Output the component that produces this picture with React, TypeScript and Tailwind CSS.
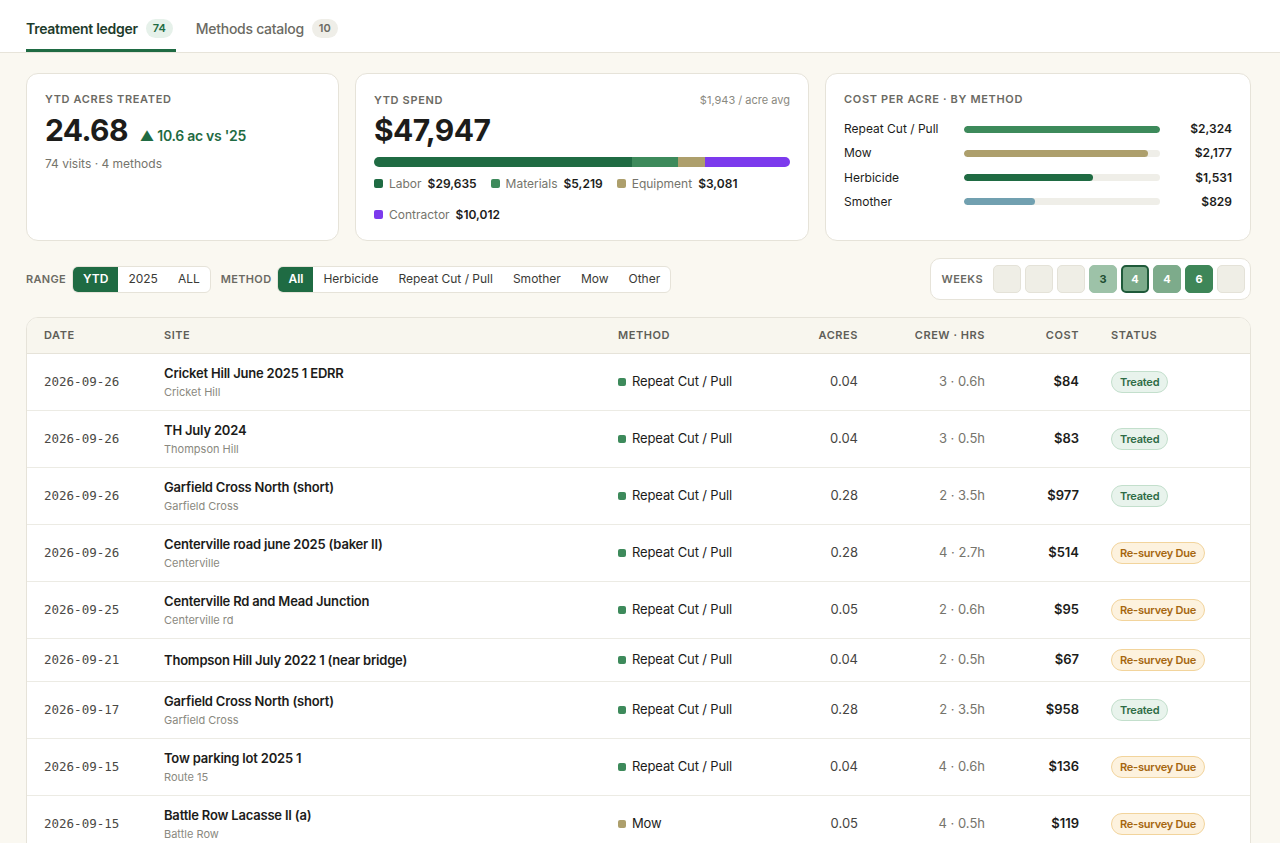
import React from "react";

const font = { fontFamily: "Inter, 'Noto Sans', sans-serif" };
const mono = { fontFamily: "'DejaVu Sans Mono', monospace" };

type Row = {
  date: string;
  title: string;
  sub?: string;
  method: "Repeat Cut / Pull" | "Mow";
  acres: string;
  crew: string;
  cost: string;
  status: "Treated" | "Re-survey Due";
};

const rows: Row[] = [
  { date: "2026-09-26", title: "Cricket Hill June 2025 1 EDRR", sub: "Cricket Hill", method: "Repeat Cut / Pull", acres: "0.04", crew: "3 · 0.6h", cost: "$84", status: "Treated" },
  { date: "2026-09-26", title: "TH July 2024", sub: "Thompson Hill", method: "Repeat Cut / Pull", acres: "0.04", crew: "3 · 0.5h", cost: "$83", status: "Treated" },
  { date: "2026-09-26", title: "Garfield Cross North (short)", sub: "Garfield Cross", method: "Repeat Cut / Pull", acres: "0.28", crew: "2 · 3.5h", cost: "$977", status: "Treated" },
  { date: "2026-09-26", title: "Centerville road june 2025 (baker II)", sub: "Centerville", method: "Repeat Cut / Pull", acres: "0.28", crew: "4 · 2.7h", cost: "$514", status: "Re-survey Due" },
  { date: "2026-09-25", title: "Centerville Rd and Mead Junction", sub: "Centerville rd", method: "Repeat Cut / Pull", acres: "0.05", crew: "2 · 0.6h", cost: "$95", status: "Re-survey Due" },
  { date: "2026-09-21", title: "Thompson Hill July 2022 1 (near bridge)", method: "Repeat Cut / Pull", acres: "0.04", crew: "2 · 0.5h", cost: "$67", status: "Re-survey Due" },
  { date: "2026-09-17", title: "Garfield Cross North (short)", sub: "Garfield Cross", method: "Repeat Cut / Pull", acres: "0.28", crew: "2 · 3.5h", cost: "$958", status: "Treated" },
  { date: "2026-09-15", title: "Tow parking lot 2025 1", sub: "Route 15", method: "Repeat Cut / Pull", acres: "0.04", crew: "4 · 0.6h", cost: "$136", status: "Re-survey Due" },
  { date: "2026-09-15", title: "Battle Row Lacasse II (a)", sub: "Battle Row", method: "Mow", acres: "0.05", crew: "4 · 0.5h", cost: "$119", status: "Re-survey Due" },
  { date: "2026-09-14", title: "Cricket Hill June 2025 2", sub: "Cricket Hill", method: "Repeat Cut / Pull", acres: "0.04", crew: "2 · 0.4h", cost: "$61", status: "Treated" },
];

const costRows = [
  { label: "Repeat Cut / Pull", pct: 100, color: "bg-[#3d8a5b]", value: "$2,324" },
  { label: "Mow", pct: 94, color: "bg-[#ad9f6c]", value: "$2,177" },
  { label: "Herbicide", pct: 66, color: "bg-[#1f6b43]", value: "$1,531" },
  { label: "Smother", pct: 36, color: "bg-[#71a0b0]", value: "$829" },
];

const weeks: { n?: string; cls: string }[] = [
  { cls: "bg-[#efeee6] border-[#e4e2d8]" },
  { cls: "bg-[#efeee6] border-[#e4e2d8]" },
  { cls: "bg-[#efeee6] border-[#e4e2d8]" },
  { n: "3", cls: "bg-[#9dc2a8] border-[#9dc2a8] text-[#1f4f33]" },
  { n: "4", cls: "bg-[#7dab8b] border-[#1f5a3a] border-2 text-white" },
  { n: "4", cls: "bg-[#7dab8b] border-[#7dab8b] text-white" },
  { n: "6", cls: "bg-[#3e8658] border-[#3e8658] text-white" },
  { cls: "bg-[#efeee6] border-[#e4e2d8]" },
];

const cols = "grid grid-cols-[120px_454px_170px_70px_127px_94px_1fr] pl-[17px] items-center";

function Label({ children }: { children: React.ReactNode }) {
  return (
    <div className="text-[11px] font-semibold tracking-[0.06em] uppercase text-[#6b6a63] leading-[16px]">
      {children}
    </div>
  );
}

export default function App() {
  return (
    <div style={font} className="min-h-screen bg-[#faf8f1] text-[#1c1c1a]">
      {/* tabs */}
      <div className="bg-white border-b border-[#e7e4da] h-[53px] px-[26px] flex items-end gap-[20px]">
        <div className="flex items-center gap-2 h-[51px] border-b-[3px] border-[#1f6b43] pt-[7px] pr-[3px]">
          <span className="text-[14px] font-semibold text-[#1d3b2b] tracking-[-0.02em]">Treatment ledger</span>
          <span className="text-[11px] font-semibold text-[#1f6b43] bg-[#e6f1ea] rounded-full px-[7px] py-[1px]">74</span>
        </div>
        <div className="flex items-center gap-2 h-[51px] border-b-[3px] border-transparent pt-[7px]">
          <span className="text-[14px] font-medium text-[#6b6a63] tracking-[-0.02em]">Methods catalog</span>
          <span className="text-[11px] font-semibold text-[#6b6a63] bg-[#efeee8] rounded-full px-[7px] py-[1px]">10</span>
        </div>
      </div>

      <div className="pl-[26px] pr-[29px] pt-[20px]">
        {/* stat cards */}
        <div className="grid grid-cols-[313px_454px_426px] gap-4 h-[168px]">
          <div className="bg-white border border-[#e6e3d9] rounded-[12px] px-[18px] pt-[17px]">
            <Label>YTD Acres Treated</Label>
            <div className="flex items-baseline gap-3 mt-[3px]">
              <span className="text-[30px] font-bold leading-[40px] tracking-[-0.02em]">24.68</span>
              <span className="text-[14px] font-semibold text-[#1f6b43] tracking-[-0.02em]">▲ 10.6 ac vs '25</span>
            </div>
            <div className="text-[12px] text-[#75746c] mt-[5px]">74 visits · 4 methods</div>
          </div>

          <div className="bg-white border border-[#e6e3d9] rounded-[12px] px-[18px] pt-[18px]">
            <div className="flex justify-between items-center">
              <Label>YTD Spend</Label>
              <span className="text-[11px] text-[#8a8980]">$1,943 / acre avg</span>
            </div>
            <div className="text-[30px] font-bold leading-[36px] mt-[3px] tracking-[-0.02em]">$47,947</div>
            <div className="flex h-[10px] rounded-full overflow-hidden mt-[9px]">
              <div className="bg-[#1f6b43] w-[258px]" />
              <div className="bg-[#3d8a5b] w-[46px]" />
              <div className="bg-[#ad9f6c] w-[27px]" />
              <div className="bg-[#7c3aed] flex-1" />
            </div>
            <div className="flex flex-wrap gap-x-[14px] gap-y-[13px] mt-[8px] text-[12px] w-[400px]">
              {[
                ["Labor", "$29,635", "bg-[#1f6b43]"],
                ["Materials", "$5,219", "bg-[#3d8a5b]"],
                ["Equipment", "$3,081", "bg-[#ad9f6c]"],
                ["Contractor", "$10,012", "bg-[#7c3aed]"],
              ].map(([l, v, c]) => (
                <div key={l} className="flex items-center gap-[6px] h-[18px]">
                  <span className={`w-[9px] h-[9px] rounded-[2px] ${c}`} />
                  <span className="text-[#75746c]">{l}</span>
                  <span className="font-semibold text-[#1c1c1a]">{v}</span>
                </div>
              ))}
            </div>
          </div>

          <div className="bg-white border border-[#e6e3d9] rounded-[12px] px-[18px] pt-[17px]">
            <Label>Cost per acre · by method</Label>
            <div className="mt-[13px] flex flex-col gap-[6.3px]">
              {costRows.map((r) => (
                <div key={r.label} className="grid grid-cols-[120px_196px_1fr] items-center h-[18px]">
                  <span className="text-[12px] text-[#1c1c1a]">{r.label}</span>
                  <div className="h-[7px] rounded-full bg-[#efeee8] overflow-hidden">
                    <div className={`h-full rounded-full ${r.color}`} style={{ width: `${r.pct}%` }} />
                  </div>
                  <span className="text-right text-[12px] font-semibold">{r.value}</span>
                </div>
              ))}
            </div>
          </div>
        </div>

        {/* filters */}
        <div className="flex items-center mt-[17px] h-[42px]">
          <span className="text-[11px] font-semibold tracking-[0.03em] text-[#6b6a63] mr-[6px]">RANGE</span>
          <div className="flex h-[27px] bg-white border border-[#e6e3d9] rounded-[6px] overflow-hidden text-[12px]">
            <span className="px-[10px] flex items-center bg-[#1f6b43] text-white font-semibold">YTD</span>
            <span className="px-[10px] flex items-center text-[#3a3a36]">2025</span>
            <span className="px-[10px] flex items-center text-[#3a3a36]">ALL</span>
          </div>
          <span className="text-[11px] font-semibold tracking-[0.03em] text-[#6b6a63] ml-[10px] mr-[6px]">METHOD</span>
          <div className="flex h-[27px] bg-white border border-[#e6e3d9] rounded-[6px] overflow-hidden text-[12px]">
            <span className="px-[10px] flex items-center bg-[#1f6b43] text-white font-semibold">All</span>
            {["Herbicide", "Repeat Cut / Pull", "Smother", "Mow", "Other"].map((m) => (
              <span key={m} className="px-[10px] flex items-center text-[#3a3a36]">{m}</span>
            ))}
          </div>
          <div className="ml-auto flex items-center gap-[4px] h-[42px] bg-white border border-[#e6e3d9] rounded-[10px] pl-[10px] pr-[5px]">
            <span className="text-[11px] font-semibold tracking-[0.04em] text-[#6b6a63] mr-[6px]">WEEKS</span>
            {weeks.map((w, i) => (
              <span
                key={i}
                className={`w-[28px] h-[28px] rounded-[5px] border flex items-center justify-center text-[11px] font-bold ${w.cls}`}
              >
                {w.n}
              </span>
            ))}
          </div>
        </div>

        {/* table */}
        <div className="mt-[17px] bg-white border border-[#e6e3d9] rounded-t-[12px] overflow-hidden">
          <div className={`${cols} h-[36px] bg-[#f8f6ee] border-b border-[#e6e3d9] text-[11px] font-semibold tracking-[0.05em] text-[#5f5e58]`}>
            <span>DATE</span>
            <span>SITE</span>
            <span>METHOD</span>
            <span className="text-right">ACRES</span>
            <span className="text-right">CREW · HRS</span>
            <span className="text-right">COST</span>
            <span className="pl-[32px]">STATUS</span>
          </div>
          {rows.map((r, i) => (
            <div key={i} className={`${cols} py-[10px] border-b border-[#ecebe4] min-h-[43px]`}>
              <span className="text-[12.5px] text-[#4a4944]" style={mono}>
                {r.date}
              </span>
              <div className="flex flex-col gap-[2px]">
                <span className="text-[13px] font-semibold leading-[18px] tracking-[-0.015em]">{r.title}</span>
                {r.sub && <span className="text-[11px] leading-[16px] text-[#8a8980]">{r.sub}</span>}
              </div>
              <div className="flex items-center gap-[6px] text-[13px] tracking-[-0.01em]">
                <span className={`w-[8px] h-[8px] rounded-[2px] ${r.method === "Mow" ? "bg-[#ad9f6c]" : "bg-[#3d8a5b]"}`} />
                {r.method}
              </div>
              <span className="text-right text-[13px] text-[#45443f]">{r.acres}</span>
              <span className="text-right text-[13px] text-[#75746c]">{r.crew}</span>
              <span className="text-right text-[13px] font-semibold">{r.cost}</span>
              <div className="pl-[32px] flex items-center">
                {r.status === "Treated" ? (
                  <span className="inline-flex items-center h-[22px] px-[8px] rounded-full border border-[#c3dfcc] bg-[#e8f3ec] text-[#2e6b45] text-[11px] font-semibold tracking-[-0.02em]">
                    Treated
                  </span>
                ) : (
                  <span className="inline-flex items-center h-[22px] px-[8px] rounded-full border border-[#f2d49c] bg-[#fdf2de] text-[#a5660f] text-[11px] font-semibold tracking-[-0.02em]">
                    Re-survey Due
                  </span>
                )}
              </div>
            </div>
          ))}
        </div>
      </div>
    </div>
  );
}
